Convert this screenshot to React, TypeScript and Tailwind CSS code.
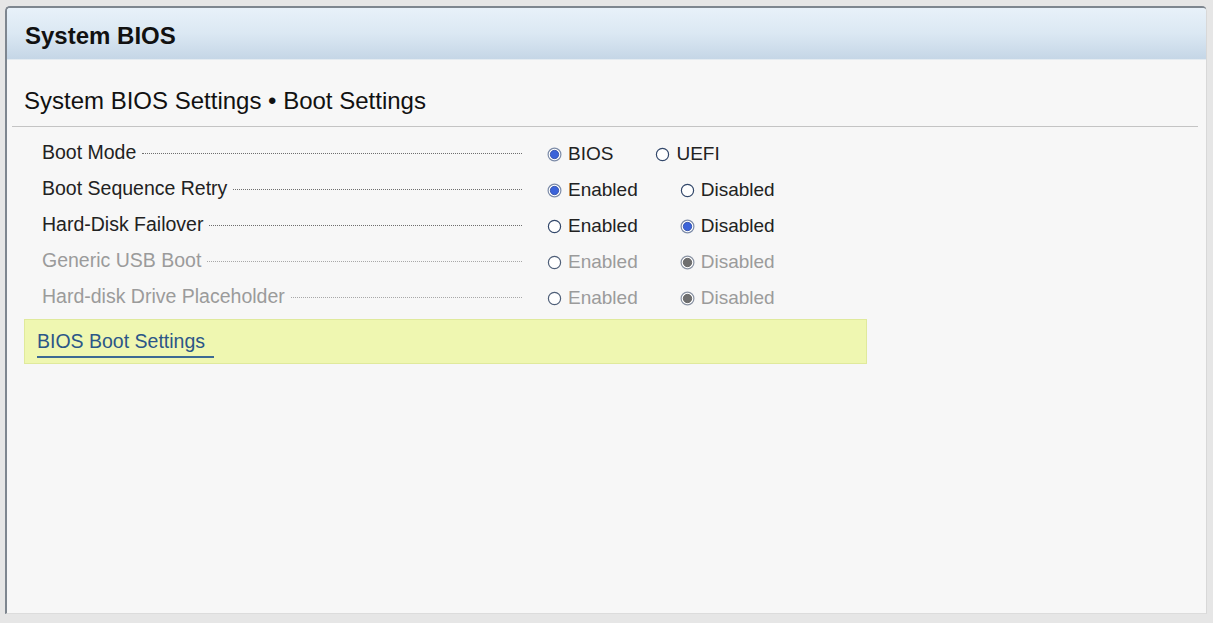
import React from "react";

type Opt = { label: string; checked: boolean };
type Row = { label: string; disabled?: boolean; options: Opt[] };

const rows: Row[] = [
  { label: "Boot Mode", options: [{ label: "BIOS", checked: true }, { label: "UEFI", checked: false }] },
  { label: "Boot Sequence Retry", options: [{ label: "Enabled", checked: true }, { label: "Disabled", checked: false }] },
  { label: "Hard-Disk Failover", options: [{ label: "Enabled", checked: false }, { label: "Disabled", checked: true }] },
  { label: "Generic USB Boot", disabled: true, options: [{ label: "Enabled", checked: false }, { label: "Disabled", checked: true }] },
  { label: "Hard-disk Drive Placeholder", disabled: true, options: [{ label: "Enabled", checked: false }, { label: "Disabled", checked: true }] },
];

function Radio({ checked, disabled }: { checked: boolean; disabled?: boolean }) {
  if (checked) {
    return (
      <svg width="15" height="15" viewBox="0 0 15 15" className="shrink-0">
        <circle cx="7.5" cy="7.5" r="6.4" fill="#ffffff" stroke={disabled ? "#8a93a3" : "#7d8ca8"} strokeWidth="1.2" />
        <circle cx="7.5" cy="7.5" r="4.2" fill={disabled ? "#6f6f6f" : "#3b63d9"} stroke={disabled ? "#5a5a5a" : "#2a49a6"} strokeWidth="0.8" />
      </svg>
    );
  }
  return (
    <svg width="15" height="15" viewBox="0 0 15 15" className="shrink-0">
      <circle cx="7.5" cy="7.5" r="6.1" fill="#ffffff" stroke={disabled ? "#4f5f78" : "#33486b"} strokeWidth="1.2" />
    </svg>
  );
}

export default function App() {
  return (
    <div className="w-[1213px] h-[623px] bg-[#e6e6e6] pt-[6px] pl-[5px] font-['Liberation_Sans',Arial,sans-serif] overflow-hidden">
      <div className="w-[1202px] h-[608px] rounded-t-[5px] border-l-2 border-t-2 border-l-[#7e868f] border-t-[#7e868f] border-r border-b border-r-[#d8d8d8] border-b-[#dcdcdc] bg-[#f7f7f7] flex flex-col overflow-hidden">
        <div className="h-[52px] shrink-0 bg-gradient-to-b from-[#e8f1f9] via-[#dbe8f3] to-[#c5d6e6] border-b border-b-[#e4ebf1] flex items-center pl-[18px] pt-[5px]">
          <span className="text-[24px] font-bold text-[#111] leading-none">System BIOS</span>
        </div>
        <div className="pt-[27px] pl-[17px] h-[55px] shrink-0">
          <div className="text-[24px] leading-[28px] text-[#111]">System BIOS Settings • Boot Settings</div>
        </div>
        <div className="ml-[5px] mr-[8px] mt-[11px] border-b border-b-[#c4c4c4]" />
        <div className="pt-[8px] flex flex-col">
          {rows.map((r) => (
            <div key={r.label} className="h-[36px] flex items-center pl-[35px]">
              <div className="w-[480px] flex items-center">
                <span className={`text-[19.5px] leading-none whitespace-nowrap ${r.disabled ? "text-[#9b9b9b]" : "text-[#222]"}`}>{r.label}</span>
                <div className={`flex-1 ml-[6px] border-b border-dotted ${r.disabled ? "border-b-[#a8a8a8]" : "border-b-[#6e6e6e]"}`} />
              </div>
              <div className="ml-[25px] flex items-center gap-[42px]">
                {r.options.map((o) => (
                  <div key={o.label} className="flex items-center gap-[6px]">
                    <div className="mt-[2px]">
                      <Radio checked={o.checked} disabled={r.disabled} />
                    </div>
                    <span className={`text-[19px] leading-none ${r.disabled ? "text-[#9b9b9b]" : "text-[#222]"}`}>{o.label}</span>
                  </div>
                ))}
              </div>
            </div>
          ))}
        </div>
        <div className="ml-[17px] mt-[4px] w-[843px] h-[45px] bg-[#eff7b1] border border-[#e0ea9c] pl-[12px] pt-[10px]">
          <span className="inline-block text-[19.5px] leading-[22px] text-[#2b5688] pr-[9px] pb-[4px] border-b-2 border-b-[#3d6a93]">BIOS Boot Settings</span>
        </div>
      </div>
    </div>
  );
}
